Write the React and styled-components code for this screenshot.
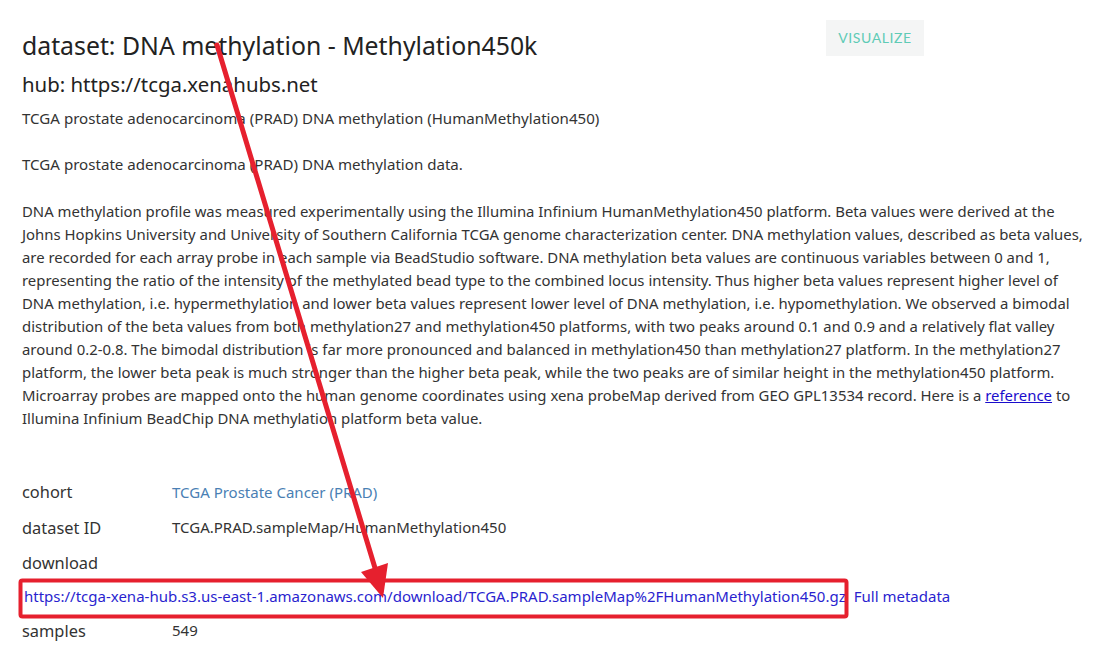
import React from "react";
import styled, { createGlobalStyle } from "styled-components";

const Global = createGlobalStyle`
  html, body { margin: 0; padding: 0; background: #fff; }
  body { font-family: "Noto Sans", "Open Sans", sans-serif; color: #333; }
`;

const Page = styled.div`
  position: relative;
  width: 1095px;
  height: 649px;
  overflow: hidden;
  box-sizing: border-box;
  padding: 20px 0 0 22px;
`;

const Header = styled.div`
  display: flex;
  align-items: flex-start;
  width: 902px;
  justify-content: space-between;
`;

const Title = styled.h1`
  margin: 10px 0 0;
  font-size: 24.8px;
  font-weight: 400;
  line-height: 30px;
  color: #222;
`;

const VisualizeButton = styled.button`
  border: none;
  background: #f4f5f5;
  color: #5fcbb6;
  font-family: Lato, "Noto Sans", sans-serif;
  font-size: 14px;
  letter-spacing: 0.6px;
  height: 36px;
  width: 98px;
  padding: 0 0 2px;
  text-transform: uppercase;
`;

const Hub = styled.h2`
  margin: 11px 0 0;
  font-size: 20.4px;
  font-weight: 400;
  line-height: 26px;
  color: #222;
`;

const Para = styled.p`
  margin: ${(p) => p.$top}px 0 0;
  font-size: ${(p) => p.$size || 15}px;
  line-height: 23px;
  color: #333;
`;

const Line = styled.span`
  display: block;
  white-space: nowrap;
`;

const RefLink = styled.a`
  color: #1a0dcc;
  text-decoration: underline;
`;

const Meta = styled.div`
  margin-top: 44px;
  display: flex;
  flex-direction: column;
`;

const MetaRow = styled.div`
  display: grid;
  grid-template-columns: 150px 1fr;
  align-items: center;
  height: 35.5px;
`;

const Label = styled.span`
  font-size: 16.4px;
  color: #333;
`;

const Value = styled.span`
  font-size: 15px;
  color: ${(p) => (p.$link ? "#4a7fb4" : "#333")};
`;

const DownloadRow = styled.div`
  display: flex;
  align-items: center;
  gap: 6px;
  height: 33px;
  font-size: 15px;
  margin-top: -1px;
`;

const UrlLink = styled.a`
  color: #2a1fcf;
  text-decoration: none;
  margin-left: 2px;
`;

const Overlay = styled.svg`
  position: absolute;
  left: 0;
  top: 0;
  pointer-events: none;
`;

const paraLines = [
  "DNA methylation profile was measured experimentally using the Illumina Infinium HumanMethylation450 platform. Beta values were derived at the",
  "Johns Hopkins University and University of Southern California TCGA genome characterization center. DNA methylation values, described as beta values,",
  "are recorded for each array probe in each sample via BeadStudio software. DNA methylation beta values are continuous variables between 0 and 1,",
  "representing the ratio of the intensity of the methylated bead type to the combined locus intensity. Thus higher beta values represent higher level of",
  "DNA methylation, i.e. hypermethylation and lower beta values represent lower level of DNA methylation, i.e. hypomethylation. We observed a bimodal",
  "distribution of the beta values from both methylation27 and methylation450 platforms, with two peaks around 0.1 and 0.9 and a relatively flat valley",
  "around 0.2-0.8. The bimodal distribution is far more pronounced and balanced in methylation450 than methylation27 platform. In the methylation27",
  "platform, the lower beta peak is much stronger than the higher beta peak, while the two peaks are of similar height in the methylation450 platform.",
];

export default function App() {
  return (
    <>
      <Global />
      <Page>
        <Header>
          <Title>dataset: DNA methylation - Methylation450k</Title>
          <VisualizeButton>Visualize</VisualizeButton>
        </Header>
        <Hub>hub: https://tcga.xenahubs.net</Hub>
        <Para $top={10} $size={15.1}>
          TCGA prostate adenocarcinoma (PRAD) DNA methylation (HumanMethylation450)
        </Para>
        <Para $top={23} $size={15.1}>TCGA prostate adenocarcinoma (PRAD) DNA methylation data.</Para>
        <Para $top={24} $size={14.9}>
          {paraLines.map((l) => (
            <Line key={l}>{l}</Line>
          ))}
          <Line>
            Microarray probes are mapped onto the human genome coordinates using xena probeMap derived from GEO GPL13534 record. Here is a{" "}
            <RefLink href="#">reference</RefLink> to
          </Line>
          <Line>Illumina Infinium BeadChip DNA methylation platform beta value.</Line>
        </Para>
        <Meta>
          <MetaRow>
            <Label>cohort</Label>
            <Value $link>TCGA Prostate Cancer (PRAD)</Value>
          </MetaRow>
          <MetaRow>
            <Label>dataset ID</Label>
            <Value>TCGA.PRAD.sampleMap/HumanMethylation450</Value>
          </MetaRow>
          <MetaRow>
            <Label>download</Label>
          </MetaRow>
          <DownloadRow>
            <UrlLink href="#">
              https://tcga-xena-hub.s3.us-east-1.amazonaws.com/download/TCGA.PRAD.sampleMap%2FHumanMethylation450.gz
            </UrlLink>
            <UrlLink href="#">Full metadata</UrlLink>
          </DownloadRow>
          <MetaRow>
            <Label>samples</Label>
            <Value>549</Value>
          </MetaRow>
        </Meta>
        <Overlay width="1095" height="649" viewBox="0 0 1095 649">
          <rect x="20.5" y="580.5" width="826" height="36" rx="2" fill="none" stroke="#e6202e" strokeWidth="4" />
          <line x1="217" y1="45" x2="375" y2="568" stroke="#e6202e" strokeWidth="5" strokeLinecap="round" />
          <polygon points="383,598 388,563 361,572" fill="#e6202e" />
        </Overlay>
      </Page>
    </>
  );
}
